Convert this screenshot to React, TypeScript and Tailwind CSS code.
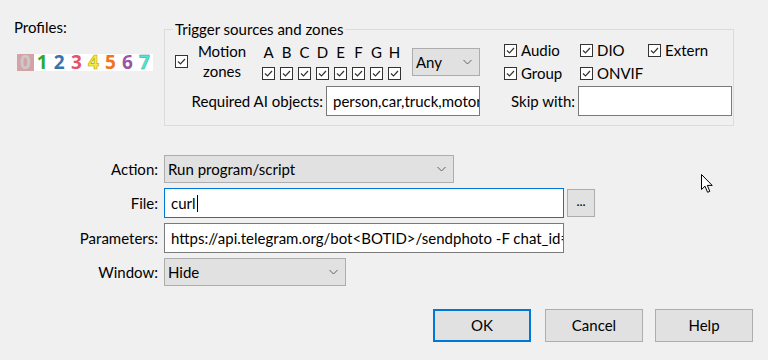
import React from "react";

function CheckBox() {
  return (
    <span className="flex h-[13px] w-[13px] shrink-0 items-center justify-center border border-[#333333] bg-white">
      <svg width="11" height="11" viewBox="0 0 11 11">
        <polyline points="2,5.5 4.5,8 9,3" fill="none" stroke="#333333" strokeWidth="1.2" />
      </svg>
    </span>
  );
}

function Chevron() {
  return (
    <svg width="9" height="6" viewBox="0 0 9 6" className="shrink-0">
      <polyline points="0.5,1 4.5,5 8.5,1" fill="none" stroke="#606060" strokeWidth="1" />
    </svg>
  );
}

function Select({ value, className }: { value: string; className: string }) {
  return (
    <div className={"flex items-center justify-between border border-[#adadad] bg-[#e1e1e1] pl-[3px] pr-[7px] " + className}>
      <span className="whitespace-nowrap">{value}</span>
      <Chevron />
    </div>
  );
}

function TextBox({ value, className, caret }: { value: string; className: string; caret?: boolean }) {
  return (
    <div className={"flex items-center overflow-hidden whitespace-nowrap bg-white pl-[6px] " + className}>
      <span>{value}</span>
      {caret && <span className="ml-[1px] h-[17px] w-[1px] bg-black" />}
    </div>
  );
}

function CheckLabel({ label, className }: { label: string; className: string }) {
  return (
    <div className={"flex h-[20px] items-center gap-[4px] " + className}>
      <CheckBox />
      <span className="leading-[20px]">{label}</span>
    </div>
  );
}

const digits = [
  { d: "1", c: "text-[#2fa82f]" },
  { d: "2", c: "text-[#3a72b0]" },
  { d: "3", c: "text-[#e4536a]" },
  { d: "4", c: "text-[#f4ec3c] [-webkit-text-stroke:0.6px_#b8a800]" },
  { d: "5", c: "text-[#f07424]" },
  { d: "6", c: "text-[#9a55a8]" },
  { d: "7", c: "text-[#52e4d0] [-webkit-text-stroke:0.4px_#20a898]" },
];

export default function App() {
  const zones = ["A", "B", "C", "D", "E", "F", "G", "H"];

  return (
    <div className="relative h-[360px] w-[768px] overflow-hidden bg-[#f0f0f0] font-['Lato',sans-serif] text-[15px] text-black">
      {/* top: profiles + trigger group */}
      <div className="flex pt-[17px]">
        <div className="w-[164px] shrink-0 pl-[14px]">
          <div className="leading-[20px]">Profiles:</div>
          <div className="mt-[17px] ml-[3px] flex h-[17px] w-[136px] items-center bg-white font-['Noto_Sans',sans-serif] font-bold text-[19px] leading-[17px]">
            <span className="flex h-[17px] w-[17px] items-center justify-center bg-[#d4a3a6] text-[#c9c9c9]">0</span>
            {digits.map((x) => (
              <span key={x.d} className={"flex h-[17px] w-[17.3px] items-center justify-center " + x.c}>
                {x.d}
              </span>
            ))}
          </div>
        </div>

        <div className="relative mt-[12px] h-[97px] w-[570px] border border-[#dcdcdc] pl-[10px] pt-[10px]">
          <span className="absolute -top-[11px] left-[8px] whitespace-nowrap bg-[#f0f0f0] px-[2px] leading-[20px]">
            Trigger sources and zones
          </span>

          <div className="flex h-[46px] items-start">
            <div className="mt-[15px]">
              <CheckBox />
            </div>
            <div className="ml-[5px] mt-[1px] w-[58px] text-center leading-[20px]">
              Motion
              <br />
              zones
            </div>
            <div className="ml-[11px] mt-[2px] flex gap-[5px]">
              {zones.map((z) => (
                <div key={z} className="flex w-[13px] flex-col items-center">
                  <span className="h-[20px] leading-[20px]">{z}</span>
                  <div className="mt-[5px]">
                    <CheckBox />
                  </div>
                </div>
              ))}
            </div>
            <Select value="Any" className="ml-[11px] mt-[8px] h-[28px] w-[68px]" />
            <div className="ml-[24px] flex flex-col gap-[3px]">
              <div className="flex">
                <CheckLabel label="Audio" className="w-[76px]" />
                <CheckLabel label="DIO" className="w-[68px]" />
                <CheckLabel label="Extern" className="" />
              </div>
              <div className="flex">
                <CheckLabel label="Group" className="w-[76px]" />
                <CheckLabel label="ONVIF" className="" />
              </div>
            </div>
          </div>

          <div className="-ml-[10px] flex h-[30px] items-center">
            <span className="w-[158px] whitespace-nowrap text-right">Required AI objects:</span>
            <TextBox value="person,car,truck,motorcycle" className="ml-[3px] h-[30px] w-[154px] border border-[#7a7a7a]" />
            <span className="ml-[31px] w-[64px] whitespace-nowrap text-right">Skip with:</span>
            <TextBox value="" className="ml-[3px] h-[30px] w-[154px] border border-[#7a7a7a]" />
          </div>
        </div>
      </div>

      {/* action form */}
      <div className="mt-[29px] flex flex-col gap-[5px]">
        <div className="flex items-center">
          <span className="w-[158px] text-right">Action:</span>
          <Select value="Run program/script" className="ml-[6px] h-[28px] w-[290px]" />
        </div>
        <div className="flex items-center">
          <span className="w-[158px] text-right">File:</span>
          <TextBox value="curl" caret className="ml-[6px] h-[30px] w-[400px] border border-[#0078d7]" />
          <div className="ml-[3px] flex h-[28px] w-[28px] items-center justify-center border border-[#adadad] bg-[#e1e1e1] pb-[2px] text-[13px]">
            ...
          </div>
        </div>
        <div className="flex items-center">
          <span className="w-[158px] text-right">Parameters:</span>
          <TextBox
            value="https://api.telegram.org/bot<BOTID>/sendphoto -F chat_id=<CHATID> -F photo=@image.jpg"
            className="ml-[6px] h-[30px] w-[400px] border border-[#7a7a7a]"
          />
        </div>
        <div className="flex items-center">
          <span className="w-[158px] text-right">Window:</span>
          <Select value="Hide" className="ml-[6px] h-[28px] w-[182px]" />
        </div>
      </div>

      {/* dialog buttons */}
      <div className="mt-[23px] flex pl-[433px]">
        <button className="h-[33px] w-[98px] border-2 border-[#0078d7] bg-[#e1e1e1]">OK</button>
        <button className="ml-[14px] h-[33px] w-[98px] border border-[#adadad] bg-[#e1e1e1]">Cancel</button>
        <button className="ml-[12px] h-[33px] w-[98px] border border-[#adadad] bg-[#e1e1e1]">Help</button>
      </div>

      {/* mouse pointer */}
      <svg className="absolute left-[701px] top-[174px]" width="13" height="20" viewBox="0 0 13 20">
        <path
          d="M0.5,0.5 L0.5,15.5 L4,12.2 L6.6,18.3 L8.8,17.3 L6.3,11.4 L11.2,11.4 Z"
          fill="white"
          stroke="black"
          strokeWidth="1"
          strokeLinejoin="miter"
        />
      </svg>
    </div>
  );
}
